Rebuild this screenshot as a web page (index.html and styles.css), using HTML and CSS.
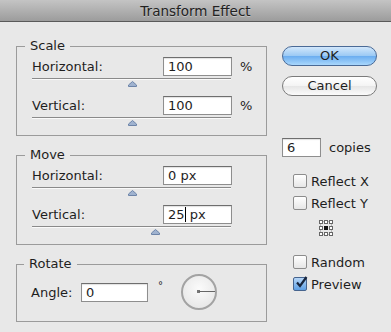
FILE: index.html
```html
<!DOCTYPE html>
<html lang="en">
<head>
  <meta charset="UTF-8">
  <title>Transform Effect</title>
  <link rel="stylesheet" href="styles.css">
</head>
<body>
  <div class="titlebar">Transform Effect</div>

  <div class="dialog">
    <!-- 왼쪽: 그룹 상자들 -->
    <div class="groups">
      <fieldset class="group">
        <legend>Scale</legend>
        <div class="row">
          <span class="label">Horizontal:</span>
          <div class="text-box">100</div>
          <span class="unit">%</span>
        </div>
        <div class="slider">
          <div class="track"></div>
          <svg class="thumb" style="margin-left:96px" width="9" height="6" viewBox="0 0 9 6"><path d="M4.5 0.5 L8.5 4 L8.5 5.5 L0.5 5.5 L0.5 4 Z" fill="#9fb2cf" stroke="#6d84a8"/></svg>
        </div>
        <div class="row">
          <span class="label">Vertical:</span>
          <div class="text-box">100</div>
          <span class="unit">%</span>
        </div>
        <div class="slider">
          <div class="track"></div>
          <svg class="thumb" style="margin-left:96px" width="9" height="6" viewBox="0 0 9 6"><path d="M4.5 0.5 L8.5 4 L8.5 5.5 L0.5 5.5 L0.5 4 Z" fill="#9fb2cf" stroke="#6d84a8"/></svg>
        </div>
      </fieldset>

      <fieldset class="group">
        <legend>Move</legend>
        <div class="row">
          <span class="label">Horizontal:</span>
          <div class="text-box">0 px</div>
          <span class="unit"></span>
        </div>
        <div class="slider">
          <div class="track"></div>
          <svg class="thumb" style="margin-left:96px" width="9" height="6" viewBox="0 0 9 6"><path d="M4.5 0.5 L8.5 4 L8.5 5.5 L0.5 5.5 L0.5 4 Z" fill="#9fb2cf" stroke="#6d84a8"/></svg>
        </div>
        <div class="row">
          <span class="label">Vertical:</span>
          <div class="text-box">25<span class="caret"></span> px</div>
          <span class="unit"></span>
        </div>
        <div class="slider">
          <div class="track"></div>
          <svg class="thumb" style="margin-left:119px" width="9" height="6" viewBox="0 0 9 6"><path d="M4.5 0.5 L8.5 4 L8.5 5.5 L0.5 5.5 L0.5 4 Z" fill="#9fb2cf" stroke="#6d84a8"/></svg>
        </div>
      </fieldset>

      <fieldset class="group rotate">
        <legend>Rotate</legend>
        <div class="angle-row">
          <span class="angle-label">Angle:</span>
          <div class="text-box angle-box">0</div>
          <span class="degree">°</span>
          <div class="dial">
            <span class="dial-dot"></span>
            <span class="dial-hand"></span>
          </div>
        </div>
      </fieldset>
    </div>

    <!-- 오른쪽: 버튼, 옵션 -->
    <div class="side">
      <div class="btn btn-ok">OK</div>
      <div class="btn btn-cancel">Cancel</div>

      <div class="copies">
        <div class="text-box copies-box">6</div>
        <span>copies</span>
      </div>

      <div class="checks first">
        <div class="check"><span class="box"></span>Reflect X</div>
        <div class="check"><span class="box"></span>Reflect Y</div>
      </div>

      <svg class="ref-point" width="14" height="16" viewBox="0 0 14 16">
        <rect x="1.5" y="1.5" width="11" height="13" fill="none" stroke="#888" stroke-dasharray="1 1"/>
        <g fill="#fff" stroke="#666">
          <rect x="0.5" y="0.5" width="3" height="3"/>
          <rect x="5.5" y="0.5" width="3" height="3"/>
          <rect x="10.5" y="0.5" width="3" height="3"/>
          <rect x="0.5" y="6.5" width="3" height="3"/>
          <rect x="10.5" y="6.5" width="3" height="3"/>
          <rect x="0.5" y="12.5" width="3" height="3"/>
          <rect x="5.5" y="12.5" width="3" height="3"/>
          <rect x="10.5" y="12.5" width="3" height="3"/>
        </g>
        <rect x="5" y="6" width="4" height="4" fill="#111"/>
      </svg>

      <div class="checks second">
        <div class="check"><span class="box"></span>Random</div>
        <div class="check"><span class="box checked"><svg width="14" height="14" viewBox="0 0 14 14"><path d="M3 6.5 L6 10 L12.5 1" fill="none" stroke="#17253d" stroke-width="2.2"/></svg></span>Preview</div>
      </div>
    </div>
  </div>
</body>
</html>
```

FILE: styles.css
```css
/* 기본 */
body {
  margin: 0;
  width: 391px;
  height: 332px;
  overflow: hidden;
  background-color: #e8e8e8;
  font-family: "DejaVu Sans", "Liberation Sans", sans-serif;
  font-size: 13px;
  color: #1e1e1e;
}
/* 타이틀 바 */
.titlebar {
  height: 21px;
  line-height: 22px;
  text-align: center;
  font-size: 13.5px;
  background: linear-gradient(#c4c4c4, #9c9c9c);
  border-bottom: 1px solid #5a5a5a;
  color: #222;
  text-shadow: 0 1px 0 rgba(255, 255, 255, 0.35);
}
.dialog {
  display: flex;
  padding: 16px 0 0 16px;
  gap: 15px;
}
/* 그룹 상자 */
.groups {
  width: 251px;
}
.group {
  margin: 0 0 11px;
  padding: 3px 0 0 15px;
  border: 1px solid #9b9b9b;
  min-width: 0;
}
.group legend {
  margin-left: -7px;
  padding: 0 5px;
  line-height: 16px;
}
.row {
  display: flex;
  align-items: center;
  height: 19px;
}
.label {
  width: 131px;
}
.text-box {
  box-sizing: border-box;
  width: 69px;
  height: 19px;
  padding: 1px 4px 0;
  line-height: 16px;
  background: #fff;
  border: 1px solid #8e8e8e;
  border-top-color: #6e6e6e;
  box-shadow: inset 0 1px 1px rgba(0, 0, 0, 0.12);
  white-space: nowrap;
}
.caret {
  display: inline-block;
  width: 1px;
  height: 15px;
  margin: 0 0 -3px;
  vertical-align: baseline;
  background: #000;
}
.unit {
  margin-left: 8px;
}
/* 슬라이더 */
.slider {
  width: 199px;
  padding: 2px 0 9px;
}
.track {
  height: 1px;
  border-top: 1px solid #8a8a8a;
  background: #fafafa;
}
.thumb {
  display: block;
  margin-top: 1px;
}
/* 회전 */
.rotate {
  padding: 2px 0 11px 14px;
}
.angle-row {
  display: flex;
  align-items: center;
  height: 36px;
}
.angle-label {
  width: 50px;
}
.angle-box {
  width: 67px;
}
.degree {
  align-self: flex-start;
  margin: 6px 0 0 10px;
  font-size: 10px;
}
.dial {
  position: relative;
  box-sizing: border-box;
  width: 36px;
  height: 36px;
  margin-left: 18px;
  border: 2px solid #a3a3a3;
  border-radius: 50%;
  background: radial-gradient(circle at 50% 40%, #fbfbfb, #e2e2e2);
}
.dial-dot {
  position: absolute;
  left: 14px;
  top: 14px;
  width: 3px;
  height: 3px;
  background: #777;
}
.dial-hand {
  position: absolute;
  left: 16px;
  top: 15px;
  width: 16px;
  height: 1px;
  background: #666;
}
/* 오른쪽 */
.side {
  width: 95px;
  padding-top: 8px;
}
.btn {
  box-sizing: border-box;
  height: 20px;
  line-height: 18px;
  text-align: center;
  border-radius: 10px;
}
.btn-ok {
  border: 1px solid #4a6a96;
  background: linear-gradient(#d2e7fb, #9ccaf4 48%, #6caef0 52%, #a9d7fc);
}
.btn-cancel {
  margin-top: 10px;
  border: 1px solid #7b7b7b;
  background: linear-gradient(#ffffff, #f4f4f4 48%, #e6e6e6 52%, #fbfbfb);
}
.copies {
  display: flex;
  align-items: center;
  margin-top: 42px;
}
.copies-box {
  width: 39px;
  margin-right: 8px;
}
.checks {
  padding-left: 11px;
}
.checks.first {
  margin-top: 13px;
}
.checks.second {
  margin-top: 15px;
}
.check {
  display: flex;
  align-items: center;
  height: 22px;
}
.box {
  box-sizing: border-box;
  width: 14px;
  height: 14px;
  margin-right: 4px;
  border: 1px solid #8c8c8c;
  border-radius: 2px;
  background: linear-gradient(#ffffff, #e6e6e6);
}
.box.checked {
  border-color: #46648e;
  background: linear-gradient(#b6d6f7, #5d9fe4);
}
.box svg {
  display: block;
  margin: -2px 0 0 0;
}
.ref-point {
  display: block;
  margin: 6px 0 0 37px;
}
```
